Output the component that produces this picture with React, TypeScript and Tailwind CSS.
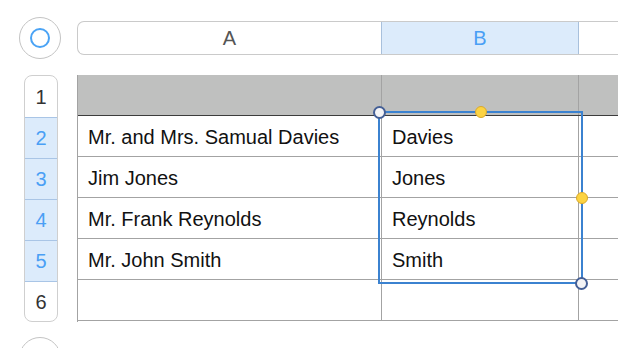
const rows = [
  { n: 2, a: 'Mr. and Mrs. Samual Davies', b: 'Davies' },
  { n: 3, a: 'Jim Jones', b: 'Jones' },
  { n: 4, a: 'Mr. Frank Reynolds', b: 'Reynolds' },
  { n: 5, a: 'Mr. John Smith', b: 'Smith' },
];

function Handle({ kind, className }: { kind: 'end' | 'mid'; className: string }) {
  return kind === 'end' ? (
    <div className={`absolute w-[13px] h-[13px] rounded-full bg-[#f4f4f6] border-2 border-[#445f96] ${className}`} />
  ) : (
    <div className={`absolute w-[12px] h-[12px] rounded-full bg-[#fcd342] border border-[#d9a92c] ${className}`} />
  );
}

export default function App() {
  return (
    <div className="w-[618px] h-[348px] bg-white overflow-hidden text-[20px]" style={{ fontFamily: '"Liberation Sans", Arial, sans-serif' }}>
      {/* column header strip */}
      <div className="flex items-center gap-[16px] pt-[17px] pl-[19px]">
        <div className="w-[42px] h-[42px] shrink-0 rounded-full border border-[#c4c4c4] flex items-center justify-center">
          <div className="w-[20px] h-[20px] rounded-full border-2 border-[#4aa3f5]" />
        </div>
        <div className="flex h-[34px] flex-1 -mr-[10px] border border-r-0 border-[#cacaca] rounded-l-[7px] text-[#555]">
          <div className="w-[303px] flex items-center justify-center">A</div>
          <div className="w-[198px] flex items-center justify-center bg-[#dcebfb] border-x border-[#a8c0dc] text-[#4a9ff5]">B</div>
          <div className="flex-1" />
        </div>
      </div>

      {/* body */}
      <div className="flex pl-[24px] gap-[19px] mt-[16px]">
        <div className="w-[34px] shrink-0 flex flex-col rounded-[8px] border border-[#cfcfcf] overflow-hidden">
          <div className="h-[41px] flex items-center justify-center text-[#333]">1</div>
          {rows.map((r) => (
            <div key={r.n} className="h-[41px] flex items-center justify-center bg-[#dcebfb] border-t border-[#a9c5e6] text-[#4a9ff5]">
              {r.n}
            </div>
          ))}
          <div className="h-[40px] flex items-center justify-center border-t border-[#a9c5e6] text-[#333]">6</div>
        </div>

        <div className="relative flex-1 -mr-[10px] border-l border-[#a3a3a3] text-[#111]">
          <div className="flex h-[41px] bg-[#bfc0bf] border-b border-[#3c3c3c]">
            <div className="w-[304px] border-r border-[#a3a3a3]" />
            <div className="w-[197px] border-r border-[#a3a3a3]" />
          </div>
          {rows.map((r) => (
            <div key={r.n} className="flex h-[41px] border-b border-[#a3a3a3]">
              <div className="w-[304px] border-r border-[#a3a3a3] flex items-center pl-[10px] pt-[2px]">{r.a}</div>
              <div className="w-[197px] border-r border-[#a3a3a3] flex items-center pl-[10px] pt-[2px]">{r.b}</div>
            </div>
          ))}
          <div className="flex h-[41px] border-b border-[#a3a3a3]">
            <div className="w-[304px] border-r border-[#a3a3a3]" />
            <div className="w-[197px] border-r border-[#a3a3a3]" />
          </div>

          {/* selection */}
          <div className="absolute left-[300px] top-[36px] w-[205px] h-[173px] border-2 border-[#3b82d0]" />
          <Handle kind="end" className="left-[295px] top-[31px]" />
          <Handle kind="mid" className="left-[397px] top-[31px]" />
          <Handle kind="mid" className="left-[498px] top-[117px]" />
          <Handle kind="end" className="left-[497px] top-[202px]" />
        </div>
      </div>

      <div className="pl-[19px] mt-[15px]">
        <div className="w-[42px] h-[42px] rounded-full border border-[#c4c4c4]" />
      </div>
    </div>
  );
}
